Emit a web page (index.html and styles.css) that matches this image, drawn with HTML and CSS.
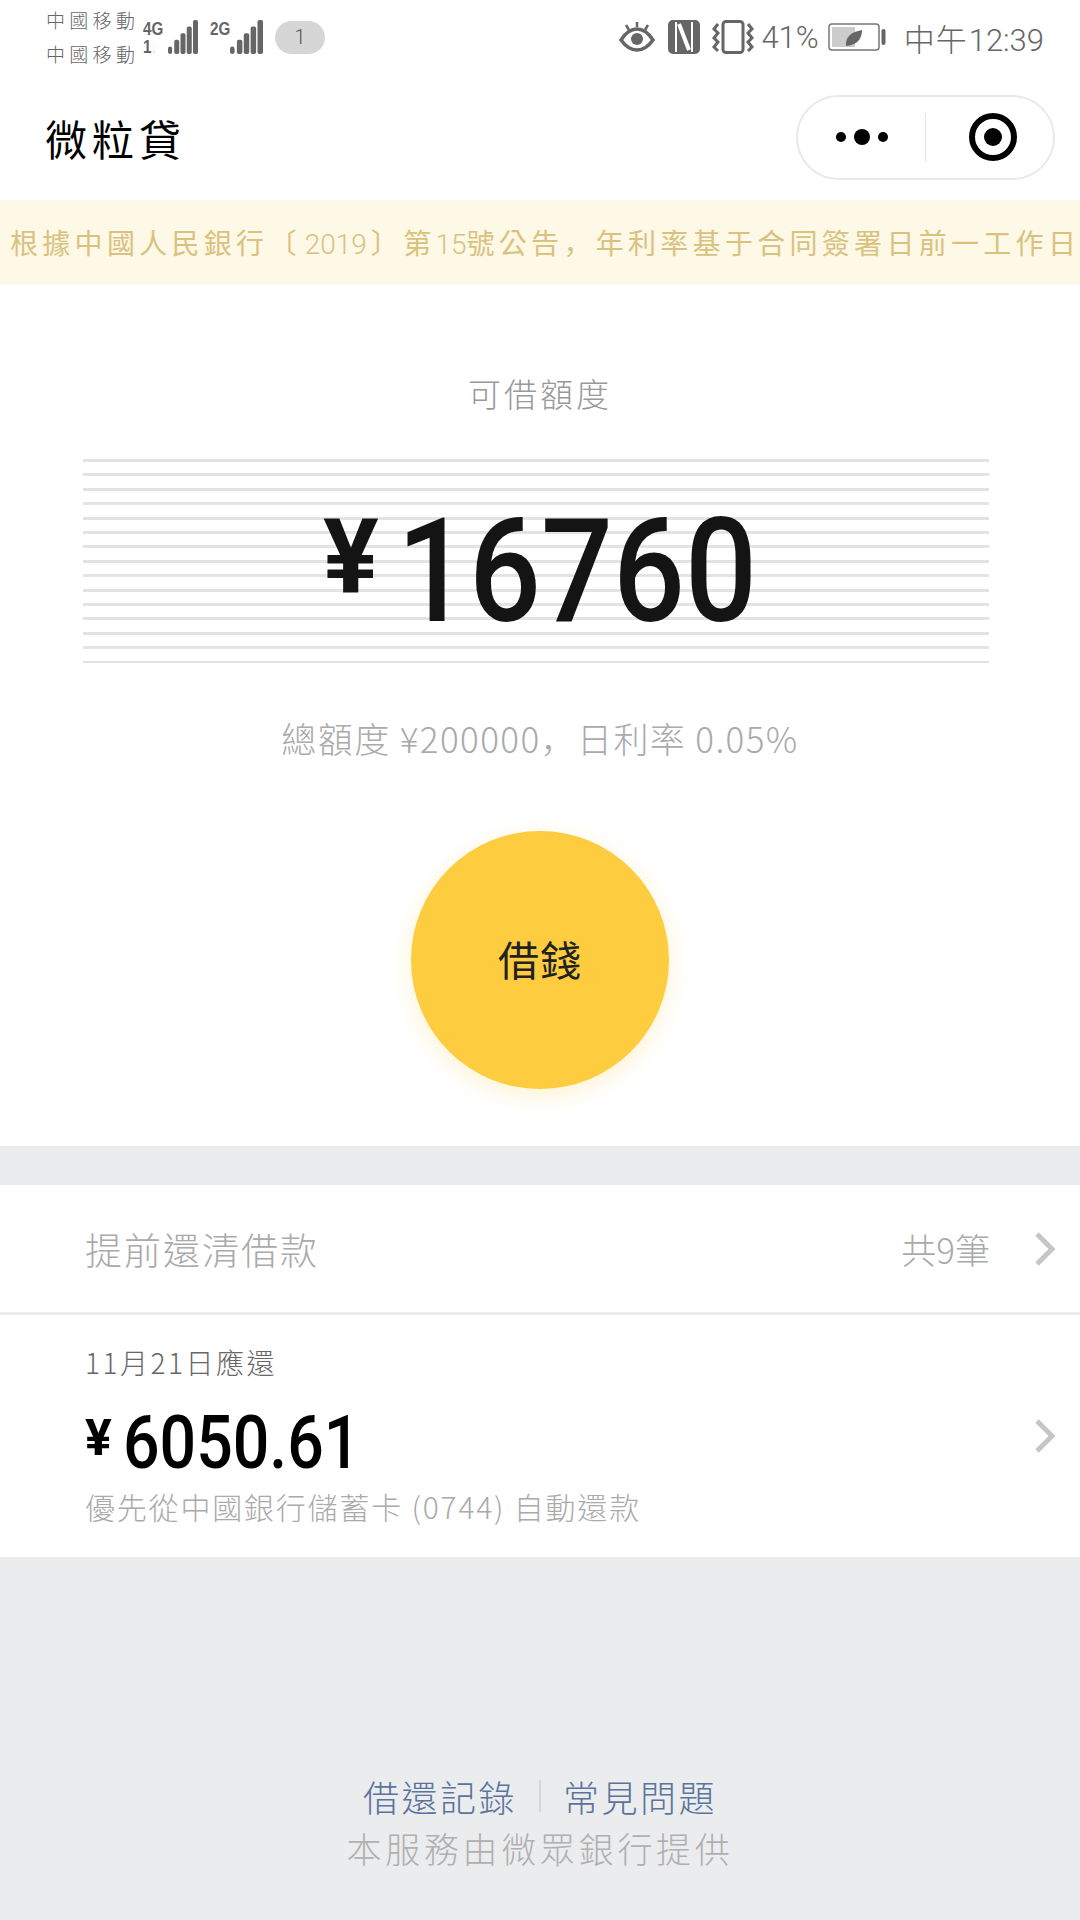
FILE: index.html
```html
<!DOCTYPE html>
<html>
<head>
  <title>微粒貸</title>
  <link rel="stylesheet" href="styles.css">
</head>
<body>
  <div id="statusBar">
    <div class="statusLeft">
      <div class="carrier"><span>中國移動</span><span>中國移動</span></div>
      <div class="signal">
        <div class="netLabels"><b>4G</b><b>1<i>↓</i></b></div>
        <svg width="30" height="34" viewBox="0 0 36 36" preserveAspectRatio="none"><g fill="#666"><rect x="0" y="28" width="5" height="8" rx="2.500"/><rect x="7.500" y="21" width="6" height="15" rx="2"/><rect x="15" y="14" width="6" height="22" rx="2"/><rect x="22.500" y="7" width="6" height="29" rx="2"/><rect x="30" y="0" width="6" height="36" rx="2"/></g></svg>
      </div>
      <div class="signal second">
        <div class="netLabels"><b>2G</b></div>
        <svg width="33" height="34" viewBox="0 0 36 36" preserveAspectRatio="none"><g fill="#666"><rect x="0" y="28" width="5" height="8" rx="2.500"/><rect x="7.500" y="21" width="6" height="15" rx="2"/><rect x="15" y="14" width="6" height="22" rx="2"/><rect x="22.500" y="7" width="6" height="29" rx="2"/><rect x="30" y="0" width="6" height="36" rx="2"/></g></svg>
      </div>
      <div class="badge">1</div>
    </div>
    <div class="statusRight">
      <svg width="36" height="32" viewBox="0 0 36 32"><path d="M2 19C7 11 12 8 18 8s11 3 16 11c-5 7-10 10-16 10S7 26 2 19z" fill="none" stroke="#666" stroke-width="3.500"/><circle cx="18" cy="18" r="6" fill="#666"/><path d="M7 4l3 5M18 1v5M29 4l-3 5" stroke="#666" stroke-width="2.500"/></svg>
      <svg class="nfcIcon" width="32" height="34" viewBox="0 0 32 34"><rect width="32" height="34" rx="5" fill="#666"/><path d="M8 2v30M24 2v30" stroke="#fff" stroke-width="2"/><path d="M11 4l10 26" stroke="#fff" stroke-width="4"/></svg>
      <svg class="vibIcon" width="44" height="34" viewBox="0 0 42 34"><rect x="11" y="1.500" width="20" height="31" rx="3" fill="none" stroke="#666" stroke-width="3"/><path d="M6 4L2 9l4 4-4 5 4 4-4 5 4 4M36 4l4 5-4 4 4 5-4 4 4 5-4 4" fill="none" stroke="#666" stroke-width="3"/></svg>
      <span class="battPercent">41%</span>
      <svg class="battIcon" width="62" height="30" viewBox="0 0 58 30"><rect x="1" y="2" width="50" height="26" rx="3" fill="none" stroke="#777" stroke-width="1.500"/><rect x="4" y="5" width="23" height="20" fill="#ccc"/><path d="M18 24c-1-9 5-14 16-16 0 10-6 15-16 16z" fill="#666"/><rect x="53.500" y="7" width="4" height="16" rx="2" fill="#666"/></svg>
      <span class="clock"><span class="clockCjk">中午</span>12:39</span>
    </div>
  </div>

  <div id="navBar">
    <h1>微粒貸</h1>
    <div class="capsule">
      <div class="capsuleHalf">
        <span class="dot"></span><span class="dot big"></span><span class="dot"></span>
      </div>
      <div class="capsuleLine"></div>
      <div class="capsuleHalf">
        <div class="target"><span></span></div>
      </div>
    </div>
  </div>

  <div id="notice">根據中國人民銀行〔<span class="num year">2019</span>〕第<span class="num">15</span>號公告<span class="comma">&#65292;</span>年利率基于合同簽署日前一工作日</div>

  <div id="mainCard">
    <p class="quotaLabel">可借額度</p>
    <div class="amountBox">
      <div class="bigAmount"><span class="bigYen">¥</span><span class="bigDigits">16760</span></div>
    </div>
    <p class="quotaInfo">總額度 ¥200000<span class="comma">&#65292;</span>日利率 0.05%</p>
    <div class="borrowButton">借錢</div>
  </div>

  <div class="row prepayRow">
    <span class="prepayTitle">提前還清借款</span>
    <span class="prepayCount">共9筆</span>
    <svg class="chevron" width="22" height="34" viewBox="0 0 22 34"><path d="M3 2l15 15L3 32" fill="none" stroke="#c6c6c6" stroke-width="5"/></svg>
  </div>

  <div class="row dueRow">
    <div class="dueText">
      <p class="dueDate">11月21日應還</p>
      <p class="dueAmount"><span class="dueYen">¥</span><span class="dueDigits">6050.61</span></p>
      <p class="dueNote">優先從中國銀行儲蓄卡 (0744) 自動還款</p>
    </div>
    <svg class="chevron" width="22" height="34" viewBox="0 0 22 34"><path d="M3 2l15 15L3 32" fill="none" stroke="#c6c6c6" stroke-width="5"/></svg>
  </div>

  <div id="footer">
    <div class="footerLinks"><a>借還記錄</a><span class="footerLine"></span><a>常見問題</a></div>
    <p class="footerNote">本服務由微眾銀行提供</p>
  </div>
</body>
</html>
```

FILE: styles.css
```css
*{
  padding: 0;
  margin: 0;
  box-sizing: border-box;
}

body{
  width: 1080px;
  height: 1920px;
  overflow: hidden;
  background-color: #ebecee;
  font-family: "Noto Sans CJK TC", "Noto Sans", sans-serif;
  font-weight: 300;
}

/* full width comma sits low on the left in the SC cut */
.comma{
  font-family: "Noto Sans CJK SC", sans-serif;
}

/* status bar */
#statusBar{
  height: 80px;
  background-color: #fff;
  display: flex;
  justify-content: space-between;
  align-items: center;
  padding: 0 36px 6px 46px;
}
.statusLeft, .statusRight{
  display: flex;
  align-items: center;
}
.carrier{
  display: flex;
  flex-direction: column;
  gap: 6px;
  font-size: 19px;
  line-height: 28px;
  letter-spacing: 4.300px;
  color: #666;
  width: 97px;
}
.signal{
  display: flex;
  align-items: flex-start;
  height: 34px;
}
.second{
  margin-left: 12px;
}
.netLabels{
  display: flex;
  flex-direction: column;
  width: 25px;
  font-family: "Liberation Sans", sans-serif;
  font-size: 19px;
  line-height: 18px;
  color: #666;
}
.second .netLabels{
  width: 20px;
}
.netLabels b{
  display: block;
  font-weight: 700;
  white-space: nowrap;
  transform: scaleX(.8);
  transform-origin: left;
}
.netLabels i{
  color: #ccc;
  font-style: normal;
  font-size: 11px;
}
.badge{
  width: 50px;
  height: 33px;
  margin-left: 12px;
  border-radius: 17px;
  background-color: #d6d6d6;
  color: #555;
  font-family: Roboto, sans-serif;
  font-size: 20px;
  line-height: 33px;
  text-align: center;
}
.nfcIcon{
  margin-left: 13px;
}
.vibIcon{
  margin-left: 11px;
}
.battPercent{
  margin-left: 6px;
  font-family: Roboto, sans-serif;
  font-weight: 300;
  font-size: 31px;
  color: #666;
}
.battIcon{
  margin-left: 7px;
}
.clock{
  margin-left: 16px;
  font-family: Roboto, sans-serif;
  font-weight: 300;
  font-size: 31px;
  color: #666;
}
.clockCjk{
  font-family: "Noto Sans CJK TC", sans-serif;
  letter-spacing: 1px;
  margin-right: 1px;
}

/* nav */
#navBar{
  height: 120px;
  background-color: #fff;
  display: flex;
  justify-content: space-between;
  align-items: center;
  padding: 0 25px 6px 45px;
}
#navBar h1{
  font-size: 42px;
  font-weight: 400;
  letter-spacing: 5px;
  color: #000;
}
.capsule{
  width: 259px;
  height: 85px;
  border: 2px solid #e9e9e9;
  border-radius: 43px;
  display: flex;
  align-items: center;
}
.capsuleHalf{
  flex: 1;
  display: flex;
  justify-content: center;
  align-items: center;
  gap: 8px;
}
.capsuleLine{
  width: 1px;
  height: 49px;
  background-color: #e4e4e4;
}
.dot{
  width: 10px;
  height: 10px;
  border-radius: 50%;
  background-color: #000;
}
.big{
  width: 16px;
  height: 16px;
}
.target{
  width: 48px;
  height: 48px;
  margin-left: 6px;
  border: 6px solid #000;
  border-radius: 50%;
  display: flex;
  justify-content: center;
  align-items: center;
}
.target span{
  width: 18px;
  height: 18px;
  border-radius: 50%;
  background-color: #000;
}

/* notice */
#notice{
  height: 85px;
  padding-left: 10px;
  background-color: #fef8e6;
  color: #d9c27e;
  font-size: 28px;
  font-weight: 400;
  line-height: 85px;
  letter-spacing: 4.300px;
  white-space: nowrap;
  overflow: hidden;
}
.num{
  font-family: Roboto, sans-serif;
  font-weight: 300;
  letter-spacing: 0;
}
.year{
  margin: 0 4px;
}

/* quota */
#mainCard{
  height: 861px;
  background-color: #fff;
  display: flex;
  flex-direction: column;
  align-items: center;
}
.quotaLabel{
  margin-top: 83px;
  font-size: 33px;
  line-height: 50px;
  letter-spacing: 3px;
  color: #999;
}
.amountBox{
  width: 906px;
  height: 204px;
  margin-top: 41px;
  margin-right: 8px;
  background-image: repeating-linear-gradient(#e3e3e3 0, #e3e3e3 3px, transparent 3px, transparent 14.4px);
  display: flex;
  justify-content: center;
  align-items: center;
}
.bigAmount{
  display: flex;
  align-items: flex-start;
  padding-top: 22px;
  color: #141414;
  font-family: Roboto, sans-serif;
}
.bigYen{
  font-size: 104px;
  font-weight: 700;
  line-height: 100px;
}
.bigDigits{
  font-size: 144px;
  font-weight: 500;
  line-height: 130px;
  width: 352px;
  margin-left: 18px;
  display: block;
  transform: scaleX(.88);
  transform-origin: left;
}
.quotaInfo{
  margin-top: 50px;
  font-size: 35px;
  line-height: 50px;
  letter-spacing: 1.400px;
  color: #aaa;
}
.borrowButton{
  width: 258px;
  height: 258px;
  margin-top: 68px;
  padding-bottom: 4px;
  border-radius: 50%;
  background-color: #fdcd3f;
  box-shadow: 0 6px 22px rgba(253,205,63,0.25);
  color: #222;
  font-size: 41px;
  font-weight: 400;
  letter-spacing: 1px;
  display: flex;
  justify-content: center;
  align-items: center;
}

/* rows */
.row{
  background-color: #fff;
  display: flex;
  align-items: center;
  padding: 0 24px 0 85px;
}
.chevron{
  flex: none;
}
.prepayRow{
  height: 127px;
  margin-top: 39px;
  margin-bottom: 3px;
}
.prepayTitle{
  flex: 1;
  font-size: 37px;
  letter-spacing: 2px;
  color: #aaa;
}
.prepayCount{
  margin-right: 44px;
  font-size: 35px;
  color: #aaa;
}
.dueRow{
  height: 242px;
  justify-content: space-between;
}
.dueDate{
  font-size: 28px;
  line-height: 36px;
  letter-spacing: 2.500px;
  color: #666;
}
.dueAmount{
  margin-top: 25px;
  display: flex;
  align-items: flex-start;
  color: #000;
  font-family: Roboto, sans-serif;
  height: 76px;
}
.dueYen{
  width: 38px;
  margin-top: 6px;
  font-size: 50px;
  font-weight: 700;
  line-height: 54px;
}
.dueDigits{
  font-size: 74px;
  font-weight: 500;
  line-height: 76px;
  display: block;
  transform: scaleX(.87);
  transform-origin: left;
  white-space: nowrap;
}
.dueNote{
  margin-top: 3px;
  font-size: 30px;
  line-height: 44px;
  letter-spacing: 1.800px;
  color: #aaa;
}

/* footer */
#footer{
  padding-top: 212px;
  display: flex;
  flex-direction: column;
  align-items: center;
}
.footerLinks{
  display: flex;
  align-items: center;
  gap: 22px;
  font-size: 36px;
  line-height: 54px;
  letter-spacing: 2.500px;
  color: #5b749c;
}
.footerLine{
  width: 2px;
  height: 32px;
  background-color: #d4d6da;
}
.footerNote{
  font-size: 35px;
  line-height: 50px;
  letter-spacing: 3.700px;
  color: #b0b0b0;
}
```
